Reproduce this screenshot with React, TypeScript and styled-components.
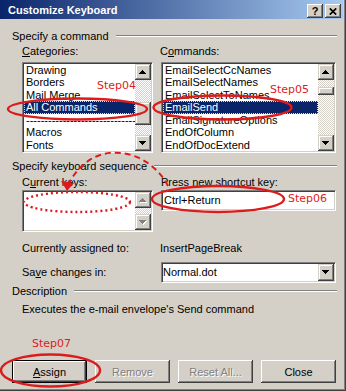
import * as React from "react";
import styled, { createGlobalStyle, css } from "styled-components";

const FACE = "#d4d0c8";
const SHADOW = "#808080";
const DARK = "#404040";
const HILITE = "#ffffff";
const NAVY = "#0a246a";
const RED = "#dc1c1c";

const GlobalStyle = createGlobalStyle`
	html, body {
		margin: 0;
		padding: 0;
		background: ${FACE};
	}
	body {
		font-family: "Liberation Sans", Arial, sans-serif;
		font-size: 11px;
		color: #000;
	}
`;

const raised = css`
	box-shadow: inset -1px -1px ${DARK}, inset 1px 1px ${HILITE},
		inset -2px -2px ${SHADOW}, inset 2px 2px ${FACE};
`;

const sunken = css`
	border: 1px solid;
	border-color: ${SHADOW} ${HILITE} ${HILITE} ${SHADOW};
	box-shadow: inset 1px 1px ${DARK}, inset -1px -1px ${FACE};
	padding: 1px;
`;

const Window = styled.div`
	position: relative;
	box-sizing: border-box;
	width: 346px;
	height: 391px;
	background: ${FACE};
	border-right: 1px solid ${DARK};
	border-bottom: 1px solid ${DARK};
	box-shadow: inset -1px -1px ${SHADOW};
	padding: 0 2px 2px 0;
	display: flex;
	flex-direction: column;
	overflow: hidden;
`;

const TitleBar = styled.div`
	height: 19px;
	flex: none;
	display: flex;
	align-items: center;
	padding: 0 2px 0 8px;
	background: linear-gradient(to right, ${NAVY}, #a6caf0);
	color: #fff;
	font-weight: bold;
	font-size: 11px;
`;

const TitleText = styled.div`
	flex: 1;
	white-space: nowrap;
`;

const CaptionButtons = styled.div`
	display: flex;
	gap: 2px;
	margin-top: 3px;
`;

const CaptionButton = styled.div`
	box-sizing: border-box;
	width: 16px;
	height: 14px;
	background: ${FACE};
	${raised};
	display: flex;
	align-items: center;
	justify-content: center;
	color: #000;
	font-size: 11px;
	font-weight: bold;
	line-height: 14px;
`;

const Body = styled.div`
	flex: 1;
	display: flex;
	flex-direction: column;
	padding: 11px 6px 5px 12px;
`;

const GroupHeader = styled.div<{ $top?: number }>`
	display: flex;
	height: 13px;
	line-height: 13px;
	margin-top: ${(p) => p.$top ?? 0}px;
	white-space: nowrap;
`;

const Rule = styled.div`
	flex: 1;
	align-self: flex-start;
	margin: 5px 0 0 7px;
	border-top: 1px solid ${SHADOW};
	border-bottom: 1px solid ${HILITE};
`;

const Indent = styled.div`
	display: flex;
	flex-direction: column;
	padding-left: 10px;
`;

const Columns = styled.div<{ $top?: number; $center?: boolean }>`
	display: grid;
	grid-template-columns: 131px 175px;
	column-gap: 8px;
	align-items: ${(p) => (p.$center ? "center" : "start")};
	margin-top: ${(p) => p.$top ?? 0}px;
`;

const Label = styled.div<{ $shift?: number }>`
	height: 13px;
	line-height: 13px;
	white-space: nowrap;
	margin-left: ${(p) => p.$shift ?? 0}px;
`;

const Key = styled.span`
	text-decoration: underline;
`;

const ListBox = styled.div<{ $height: number }>`
	box-sizing: border-box;
	height: ${(p) => p.$height}px;
	background: #fff;
	${sunken};
	display: flex;
`;

const Items = styled.div`
	flex: 1;
	min-width: 0;
	display: flex;
	flex-direction: column;
	overflow: hidden;
`;

const Item = styled.div<{ $selected?: boolean }>`
	height: 13px;
	line-height: 13px;
	padding-left: 2px;
	white-space: nowrap;
	overflow: hidden;
	${(p) =>
		p.$selected &&
		css`
			background: ${NAVY};
			color: #fff;
			outline: 1px dotted #f5db95;
			outline-offset: -1px;
		`}
`;

const ScrollBar = styled.div`
	width: 16px;
	flex: none;
	display: flex;
	flex-direction: column;
`;

const ScrollButton = styled.div`
	box-sizing: border-box;
	width: 16px;
	height: 16px;
	flex: none;
	background: ${FACE};
	box-shadow: inset -1px -1px ${DARK}, inset 1px 1px ${FACE},
		inset -2px -2px ${SHADOW}, inset 2px 2px ${HILITE};
	display: flex;
	align-items: center;
	justify-content: center;
`;

const Track = styled.div`
	flex: 1;
	display: flex;
	flex-direction: column;
	background-color: ${FACE};
	background-image: conic-gradient(#fff 25%, transparent 0 50%, #fff 0 75%, transparent 0);
	background-size: 2px 2px;
`;

const Thumb = styled.div<{ $offset: number; $size: number }>`
	box-sizing: border-box;
	height: ${(p) => p.$size}px;
	margin-top: ${(p) => p.$offset}px;
	background: ${FACE};
	box-shadow: inset -1px -1px ${DARK}, inset 1px 1px ${FACE},
		inset -2px -2px ${SHADOW}, inset 2px 2px ${HILITE};
`;

const TextBox = styled.div`
	box-sizing: border-box;
	height: 21px;
	background: #fff;
	${sunken};
	line-height: 17px;
	padding-left: 2px;
	white-space: nowrap;
`;

const Combo = styled.div`
	box-sizing: border-box;
	height: 21px;
	background: #fff;
	${sunken};
	display: flex;
	align-items: stretch;
`;

const ComboText = styled.div`
	flex: 1;
	line-height: 17px;
	white-space: nowrap;
`;

const Value = styled.div`
	height: 13px;
	line-height: 13px;
	white-space: nowrap;
	margin-left: -1px;
`;

const Description = styled.div`
	height: 13px;
	line-height: 13px;
	margin: 5px 0 0 10px;
	white-space: nowrap;
`;

const ButtonRow = styled.div`
	margin-top: auto;
	display: flex;
	gap: 8px;
`;

const Button = styled.div<{ $default?: boolean; $disabled?: boolean }>`
	box-sizing: border-box;
	width: 75px;
	height: 23px;
	background: ${FACE};
	display: flex;
	align-items: center;
	justify-content: center;
	${raised};
	${(p) =>
		p.$default &&
		css`
			border: 1px solid #000;
			box-shadow: inset -1px -1px ${DARK}, inset 1px 1px ${HILITE},
				inset -2px -2px ${SHADOW};
		`}
	${(p) =>
		p.$disabled &&
		css`
			color: ${SHADOW};
			text-shadow: 1px 1px #fff;
		`}
`;

const Overlay = styled.svg`
	position: absolute;
	left: 0;
	top: 0;
	pointer-events: none;
`;

const StepLabel = styled.div<{ $x: number; $y: number }>`
	position: absolute;
	left: ${(p) => p.$x}px;
	top: ${(p) => p.$y}px;
	font-family: "DejaVu Sans", Verdana, sans-serif;
	font-size: 11px;
	line-height: 13px;
	color: ${RED};
	white-space: nowrap;
`;

const ARROW = "M3 0h1v1h1v1h1v1h1v1H0V3h1V2h1V1h1z";

const Arrow = ({ down, disabled }: { down?: boolean; disabled?: boolean }) => {
	const flip = down ? "matrix(1 0 0 -1 0 4)" : undefined;
	return (
		<svg width="8" height="5" viewBox="0 0 8 5" shapeRendering="crispEdges">
			{disabled && (
				<g transform="translate(1 1)">
					<path d={ARROW} transform={flip} fill="#fff" />
				</g>
			)}
			<path d={ARROW} transform={flip} fill={disabled ? SHADOW : "#000"} />
		</svg>
	);
};

const Scroller = ({
	offset,
	size,
	disabled,
}: {
	offset?: number;
	size?: number;
	disabled?: boolean;
}) => (
	<ScrollBar>
		<ScrollButton>
			<Arrow disabled={disabled} />
		</ScrollButton>
		<Track>{size ? <Thumb $offset={offset ?? 0} $size={size} /> : null}</Track>
		<ScrollButton>
			<Arrow down disabled={disabled} />
		</ScrollButton>
	</ScrollBar>
);

const CATEGORIES = [
	"Drawing",
	"Borders",
	"Mail Merge",
	"All Commands",
	"------------------------------------------------------",
	"Macros",
	"Fonts",
];

const COMMANDS = [
	"EmailSelectCcNames",
	"EmailSelectNames",
	"EmailSelectToNames",
	"EmailSend",
	"EmailSignatureOptions",
	"EndOfColumn",
	"EndOfDocExtend",
];

export default function App() {
	return (
		<>
			<GlobalStyle />
			<Window>
				<TitleBar>
					<TitleText>Customize Keyboard</TitleText>
					<CaptionButtons>
						<CaptionButton>?</CaptionButton>
						<CaptionButton>
							<svg width="8" height="7" viewBox="0 0 8 7">
								<path d="M0.8 0.4L7.2 6.6M7.2 0.4L0.8 6.6" stroke="#000" strokeWidth="1.7" />
							</svg>
						</CaptionButton>
					</CaptionButtons>
				</TitleBar>
				<Body>
					<GroupHeader>
						Specify a command
						<Rule />
					</GroupHeader>
					<Indent>
						<Columns $top={2}>
							<Label>
								<Key>C</Key>ategories:
							</Label>
							<Label $shift={-1}>
								C<Key>o</Key>mmands:
							</Label>
						</Columns>
						<Columns $top={4}>
							<ListBox $height={91}>
								<Items>
									{CATEGORIES.map((c) => (
										<Item key={c} $selected={c === "All Commands"}>
											{c}
										</Item>
									))}
								</Items>
								<Scroller offset={22} size={23} />
							</ListBox>
							<ListBox $height={91}>
								<Items>
									{COMMANDS.map((c) => (
										<Item key={c} $selected={c === "EmailSend"}>
											{c}
										</Item>
									))}
								</Items>
								<Scroller offset={7} size={8} />
							</ListBox>
						</Columns>
					</Indent>
					<GroupHeader $top={7}>
						Specify keyboard sequence
						<Rule />
					</GroupHeader>
					<Indent>
						<Columns $top={3}>
							<Label>
								C<Key>u</Key>rrent keys:
							</Label>
							<Label>
								Press <Key>n</Key>ew shortcut key:
							</Label>
						</Columns>
						<Columns $top={1}>
							<ListBox $height={42}>
								<Items />
								<Scroller disabled />
							</ListBox>
							<TextBox>Ctrl+Return</TextBox>
						</Columns>
						<Columns $top={10}>
							<Label>Currently assigned to:</Label>
							<Value>InsertPageBreak</Value>
						</Columns>
						<Columns $top={7} $center>
							<Label>
								Sa<Key>v</Key>e changes in:
							</Label>
							<Combo>
								<ComboText>Normal.dot</ComboText>
								<ScrollButton style={{ height: 17 }}>
									<Arrow down />
								</ScrollButton>
							</Combo>
						</Columns>
					</Indent>
					<GroupHeader $top={2}>
						Description
						<Rule />
					</GroupHeader>
					<Description>Executes the e-mail envelope's Send command</Description>
					<ButtonRow>
						<Button $default>
							<span>
								<Key>A</Key>ssign
							</span>
						</Button>
						<Button $disabled>Remove</Button>
						<Button $disabled>Reset All...</Button>
						<Button>Close</Button>
					</ButtonRow>
				</Body>

				<Overlay width="346" height="391" viewBox="0 0 346 391">
					<g fill="none" stroke={RED} strokeWidth="2.4">
						<ellipse cx="77.5" cy="109" rx="69.5" ry="10.5" />
						<ellipse cx="222.5" cy="107.5" rx="69" ry="12" />
						<ellipse cx="218" cy="199" rx="66" ry="13" />
						<ellipse cx="50.5" cy="370.5" rx="49.5" ry="16" />
						<ellipse cx="77" cy="202" rx="53" ry="10" strokeDasharray="2 3" />
						<path d="M168 186 C150 150 95 135 69 183" strokeDasharray="6 4" strokeWidth="2" />
					</g>
					<path d="M67 191 L61 181 L74 183 Z" fill={RED} />
				</Overlay>
				<StepLabel $x={97} $y={79}>Step04</StepLabel>
				<StepLabel $x={270} $y={83}>Step05</StepLabel>
				<StepLabel $x={288} $y={192}>Step06</StepLabel>
				<StepLabel $x={32} $y={337}>Step07</StepLabel>
			</Window>
		</>
	);
}
